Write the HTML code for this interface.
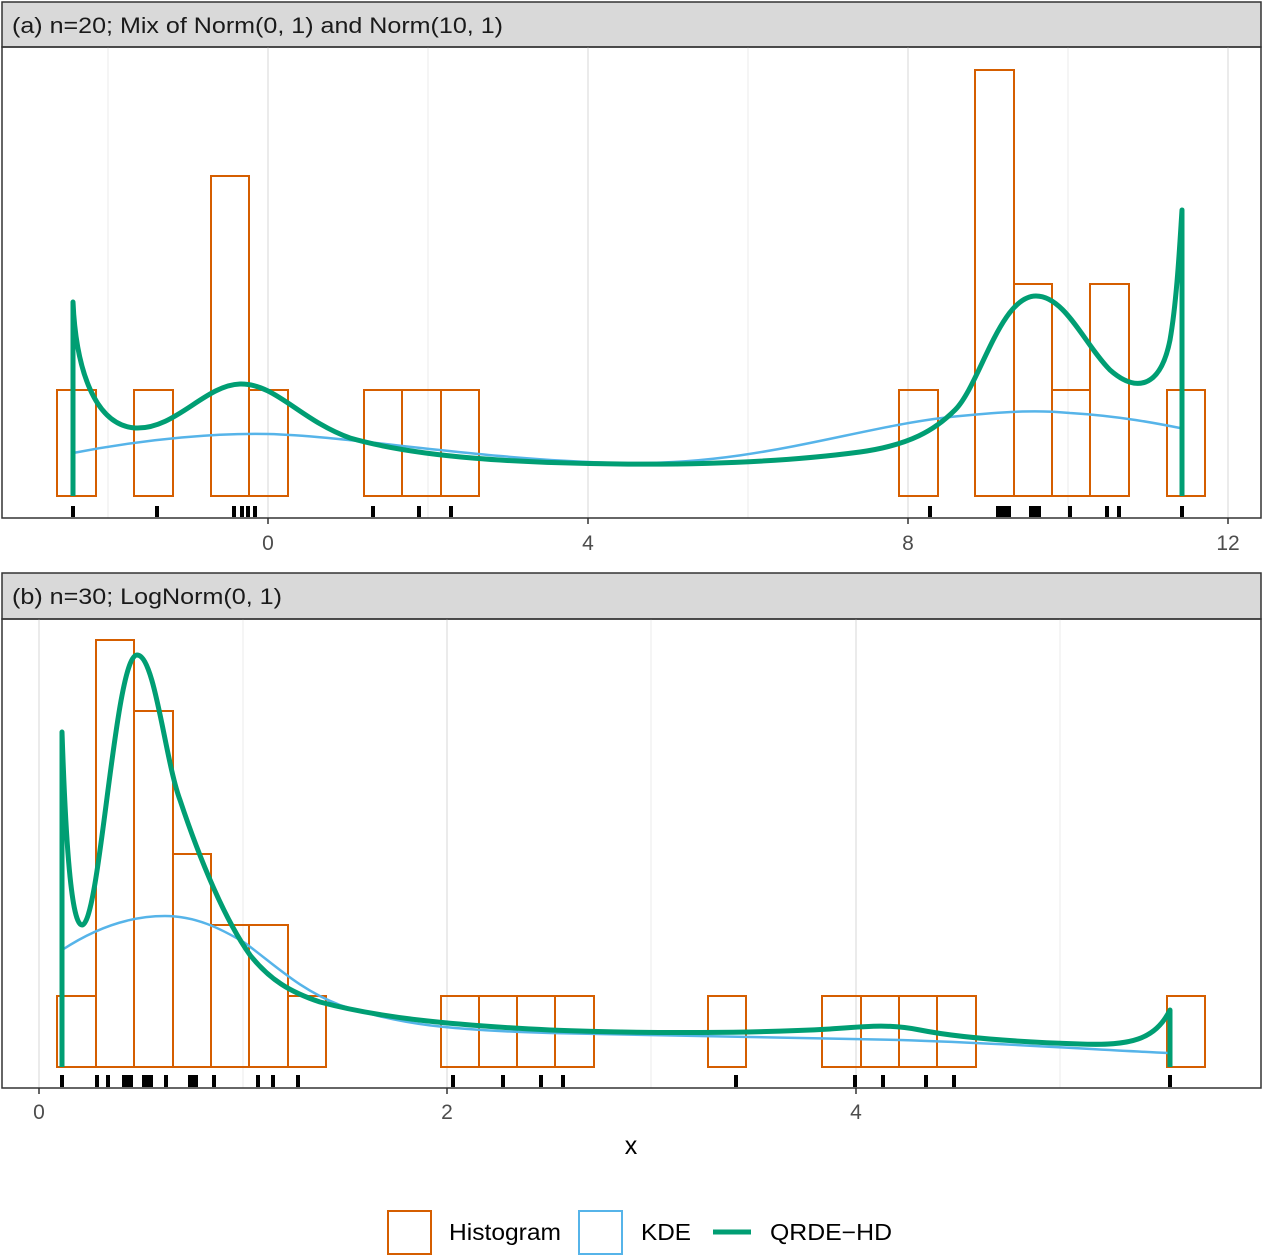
<!DOCTYPE html>
<html><head><meta charset="utf-8"><style>
html,body{margin:0;padding:0;background:#fff;}
svg{display:block;font-family:"Liberation Sans",sans-serif;}
</style></head><body>
<svg width="1264" height="1256" viewBox="0 0 1264 1256" xmlns="http://www.w3.org/2000/svg">
<rect width="1264" height="1256" fill="#fff"/>
<!-- Panel a -->
<rect x="2" y="2" width="1259" height="45" fill="#d9d9d9" stroke="#333" stroke-width="1.5"/>
<text x="12" y="33" font-size="22" fill="#1a1a1a" textLength="491" lengthAdjust="spacingAndGlyphs">(a) n=20; Mix of Norm(0, 1) and Norm(10, 1)</text>
<g stroke="#ebebeb" stroke-width="1">
<line x1="108" y1="47" x2="108" y2="518"/><line x1="428" y1="47" x2="428" y2="518"/><line x1="748" y1="47" x2="748" y2="518"/><line x1="1068" y1="47" x2="1068" y2="518"/>
</g>
<g stroke="#ebebeb" stroke-width="2">
<line x1="268" y1="47" x2="268" y2="518"/><line x1="588" y1="47" x2="588" y2="518"/><line x1="908" y1="47" x2="908" y2="518"/><line x1="1228" y1="47" x2="1228" y2="518"/>
</g>
<g fill="none" stroke="#D55E00" stroke-width="2">
<rect x="57" y="390" width="39" height="106"/><rect x="134" y="390" width="39" height="106"/>
<rect x="211" y="176" width="38" height="320"/><rect x="249" y="390" width="39" height="106"/>
<rect x="364" y="390" width="38" height="106"/><rect x="402" y="390" width="39" height="106"/><rect x="441" y="390" width="38" height="106"/>
<rect x="899" y="390" width="39" height="106"/><rect x="975" y="70" width="39" height="426"/>
<rect x="1014" y="284" width="38" height="212"/><rect x="1052" y="390" width="38" height="106"/>
<rect x="1090" y="284" width="39" height="212"/><rect x="1167" y="390" width="38" height="106"/>
</g>
<path d="M73,453 C150,438 220,433 268,434 C350,436 480,460 620,463 C760,466 860,425 960,416 C1010,411 1040,410 1070,413 C1120,416 1160,424 1180,428" fill="none" stroke="#56B4E9" stroke-width="2.5"/>
<path d="M73,496 L73,302 C76,370 95,425 135,428 C175,430 205,385 240,384 C275,383 300,420 350,438 C420,458 520,463 620,464 C720,465 800,460 860,452 C910,445 935,430 955,410 C980,385 1000,296 1036,296 C1065,296 1085,345 1110,370 C1135,392 1160,390 1170,340 C1177,300 1180,240 1182,210 L1182,496" fill="none" stroke="#009E73" stroke-width="5" stroke-linejoin="round"/>
<g fill="#000">
<rect x="71" y="506" width="4" height="11"/><rect x="155" y="506" width="4" height="11"/><rect x="232" y="506" width="4" height="11"/><rect x="240" y="506" width="4" height="11"/><rect x="246" y="506" width="4" height="11"/><rect x="253" y="506" width="4" height="11"/><rect x="371" y="506" width="4" height="11"/><rect x="417" y="506" width="4" height="11"/><rect x="449" y="506" width="4" height="11"/><rect x="928" y="506" width="4" height="11"/><rect x="996" y="506" width="15" height="11"/><rect x="1029" y="506" width="12" height="11"/><rect x="1068" y="506" width="4" height="11"/><rect x="1105" y="506" width="4" height="11"/><rect x="1117" y="506" width="4" height="11"/><rect x="1180" y="506" width="4" height="11"/>
</g>
<rect x="2" y="47" width="1259" height="471" fill="none" stroke="#333" stroke-width="1.5"/>
<g stroke="#333" stroke-width="1.5"><line x1="268" y1="518" x2="268" y2="524"/><line x1="588" y1="518" x2="588" y2="524"/><line x1="908" y1="518" x2="908" y2="524"/><line x1="1228" y1="518" x2="1228" y2="524"/></g>
<g font-size="21" fill="#4d4d4d" text-anchor="middle"><text x="268" y="550">0</text><text x="588" y="550">4</text><text x="908" y="550">8</text><text x="1228" y="550">12</text></g>

<!-- Panel b -->
<rect x="2" y="573" width="1259" height="46" fill="#d9d9d9" stroke="#333" stroke-width="1.5"/>
<text x="12" y="604" font-size="22" fill="#1a1a1a" textLength="270" lengthAdjust="spacingAndGlyphs">(b) n=30; LogNorm(0, 1)</text>
<g stroke="#ebebeb" stroke-width="1">
<line x1="243" y1="619" x2="243" y2="1088"/><line x1="651" y1="619" x2="651" y2="1088"/><line x1="1060" y1="619" x2="1060" y2="1088"/>
</g>
<g stroke="#ebebeb" stroke-width="2">
<line x1="39" y1="619" x2="39" y2="1088"/><line x1="447" y1="619" x2="447" y2="1088"/><line x1="856" y1="619" x2="856" y2="1088"/>
</g>
<g fill="none" stroke="#D55E00" stroke-width="2">
<rect x="57" y="996" width="39" height="71"/><rect x="96" y="640" width="38" height="427"/><rect x="134" y="711" width="39" height="356"/>
<rect x="173" y="854" width="38" height="213"/><rect x="211" y="925" width="38" height="142"/><rect x="249" y="925" width="39" height="142"/>
<rect x="288" y="996" width="38" height="71"/><rect x="441" y="996" width="38" height="71"/><rect x="479" y="996" width="38" height="71"/>
<rect x="517" y="996" width="38" height="71"/><rect x="555" y="996" width="39" height="71"/><rect x="708" y="996" width="38" height="71"/>
<rect x="822" y="996" width="39" height="71"/><rect x="861" y="996" width="38" height="71"/><rect x="899" y="996" width="38" height="71"/><rect x="937" y="996" width="39" height="71"/>
<rect x="1167" y="996" width="38" height="71"/>
</g>
<path d="M62,950 C100,925 135,916 165,916 C195,916 220,928 245,943 C275,965 300,990 340,1005 C400,1025 450,1030 550,1033 C650,1036 750,1037 900,1040 C1000,1043 1100,1050 1168,1053" fill="none" stroke="#56B4E9" stroke-width="2.5"/>
<path d="M62,1067 L62,732 C65,820 70,925 82,925 C100,925 115,655 137,655 C155,655 165,760 180,800 C200,860 225,920 250,955 C270,980 290,992 320,1002 C380,1018 450,1025 550,1030 C650,1034 760,1033 830,1029 C870,1026 890,1024 920,1030 C960,1038 1020,1042 1080,1044 C1130,1046 1155,1040 1170,1010 L1170,1067" fill="none" stroke="#009E73" stroke-width="5" stroke-linejoin="round"/>
<g fill="#000">
<rect x="60" y="1075" width="4" height="12"/><rect x="95" y="1075" width="4" height="12"/><rect x="106" y="1075" width="4" height="12"/><rect x="122" y="1075" width="11" height="12"/><rect x="142" y="1075" width="11" height="12"/><rect x="164" y="1075" width="4" height="12"/><rect x="188" y="1075" width="10" height="12"/><rect x="212" y="1075" width="4" height="12"/><rect x="256" y="1075" width="4" height="12"/><rect x="271" y="1075" width="4" height="12"/><rect x="296" y="1075" width="4" height="12"/><rect x="451" y="1075" width="4" height="12"/><rect x="501" y="1075" width="4" height="12"/><rect x="539" y="1075" width="4" height="12"/><rect x="561" y="1075" width="4" height="12"/><rect x="734" y="1075" width="4" height="12"/><rect x="853" y="1075" width="4" height="12"/><rect x="881" y="1075" width="4" height="12"/><rect x="924" y="1075" width="4" height="12"/><rect x="952" y="1075" width="4" height="12"/><rect x="1168" y="1075" width="4" height="12"/>
</g>
<rect x="2" y="619" width="1259" height="469" fill="none" stroke="#333" stroke-width="1.5"/>
<g stroke="#333" stroke-width="1.5"><line x1="39" y1="1088" x2="39" y2="1094"/><line x1="447" y1="1088" x2="447" y2="1094"/><line x1="856" y1="1088" x2="856" y2="1094"/></g>
<g font-size="21" fill="#4d4d4d" text-anchor="middle"><text x="39" y="1119">0</text><text x="447" y="1119">2</text><text x="856" y="1119">4</text></g>
<text x="631" y="1154" font-size="25" text-anchor="middle" fill="#000">x</text>

<!-- Legend -->
<rect x="388" y="1211" width="43" height="43" fill="none" stroke="#D55E00" stroke-width="2"/>
<text x="449" y="1240" font-size="23" fill="#000" textLength="112" lengthAdjust="spacingAndGlyphs">Histogram</text>
<rect x="579" y="1211" width="43" height="43" fill="none" stroke="#56B4E9" stroke-width="2"/>
<text x="641" y="1240" font-size="23" fill="#000" textLength="50" lengthAdjust="spacingAndGlyphs">KDE</text>
<line x1="713" y1="1232" x2="751" y2="1232" stroke="#009E73" stroke-width="5"/>
<text x="770" y="1240" font-size="23" fill="#000" textLength="122" lengthAdjust="spacingAndGlyphs">QRDE−HD</text>
</svg>
</body></html>
